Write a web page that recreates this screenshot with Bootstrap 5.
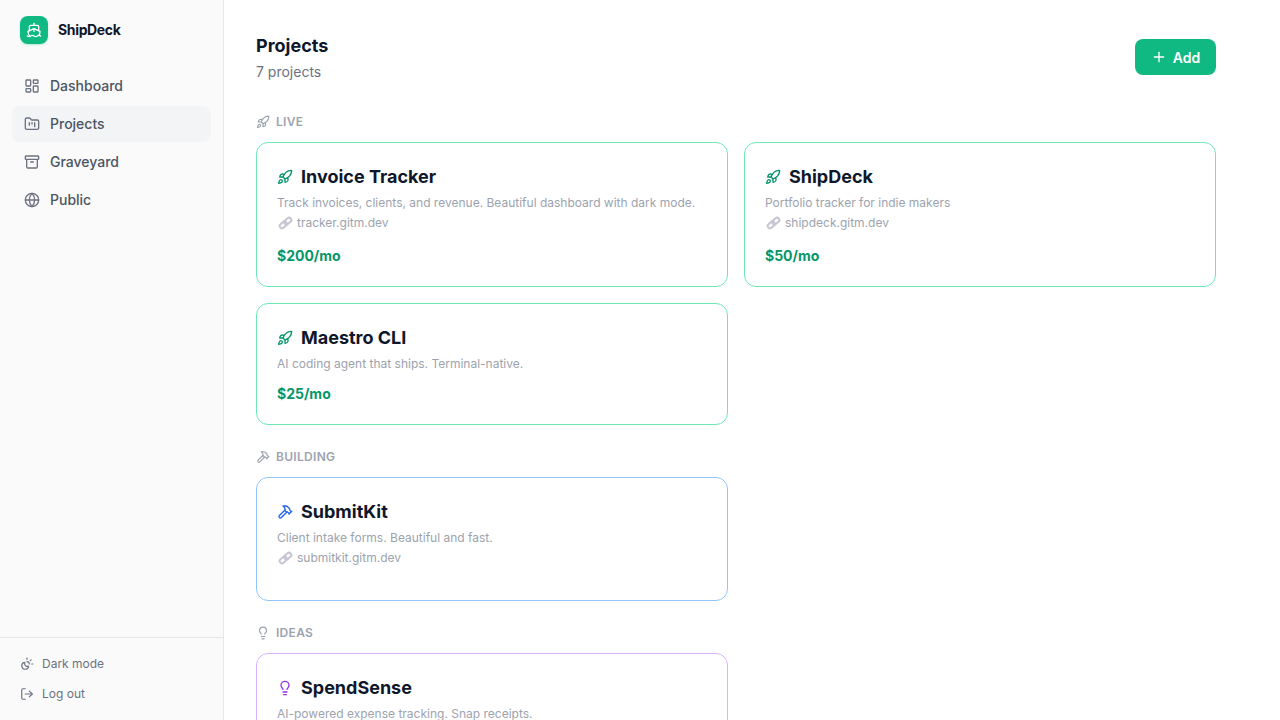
<!DOCTYPE html>
<html lang="en">
<head>
  <meta charset="UTF-8" />
  <meta name="viewport" content="width=device-width, initial-scale=1" />
  <title>Projects | ShipDeck</title>
  <link href="https://cdn.jsdelivr.net/npm/bootstrap@5.3.2/dist/css/bootstrap.min.css" rel="stylesheet" />
  <style>
    html, body { height: 100%; overflow: hidden; }
    body { font-family: Inter, "Liberation Sans", sans-serif; color: #111827; background: #fff; }
    svg.ico { fill: none; stroke: currentColor; stroke-width: 2; stroke-linecap: round; stroke-linejoin: round; flex-shrink: 0; }

    .side { width: 224px; height: 720px; background: #fafafa; border-right: 1px solid #e5e7eb; }
    .brand { padding: 16px 20px 0; height: 68px; gap: 10px; }
    .brand-mark { width: 28px; height: 28px; border-radius: 8px; background: #10b981; color: #fff; box-shadow: 0 1px 2px rgba(16,185,129,.3); }
    .brand-name { height: 28px; font-size: 14px; font-weight: 700; color: #0f172a; letter-spacing: -.35px; }
    .side-nav { padding: 0 12px; gap: 2px; }
    .side-link { height: 36px; padding: 0 12px; gap: 10px; border-radius: 8px; font-size: 14px; line-height: 20px; font-weight: 500; color: #4b5563; text-decoration: none; }
    .side-link svg { color: #6b7280; }
    .side-link.on { background: #f3f4f6; }
    .side-foot { border-top: 1px solid #e5e7eb; padding: 11px 20px 11px; }
    .foot-link { height: 30px; gap: 8px; font-size: 12px; font-weight: 400; color: #6b7280; text-decoration: none; }

    .main-pane { padding: 32px 64px 0 32px; min-width: 0; }
    .page-head { margin-bottom: 32px; }
    .page-title { font-size: 18px; font-weight: 700; line-height: 28px; margin: 0; color: #0f172a; }
    .page-sub { font-size: 14px; line-height: 20px; color: #6b7280; margin: 2px 0 0; }
    .add-btn { width: 81px; height: 36px; background: #10b981; border: 0; border-radius: 8px; color: #fff; font-size: 14px; font-weight: 600; gap: 6px; padding: 0; margin-top: 7px; }
    .add-btn:hover { background: #10b981; color: #fff; }

    .grp-label { font-size: 12px; line-height: 16px; font-weight: 600; letter-spacing: .3px; color: #9ca3af; text-transform: uppercase; gap: 6px; margin-bottom: 12px; height: 16px; }
    .proj-grid { display: grid; grid-template-columns: 472px 472px; gap: 16px; }
    .proj { border: 1px solid; border-radius: 12px; padding: 20px; background: #fff; }
    .proj.live { border-color: #6ee7b7; }
    .proj.build { border-color: #93c5fd; min-height: 124px; }
    .proj.idea { border-color: #d8b4fe; }
    .proj-head { gap: 8px; height: 28px; }
    .proj-name { font-size: 18px; font-weight: 700; line-height: 28px; margin: 0; color: #0f172a; }
    .proj-desc { font-size: 12px; line-height: 16px; color: #9ca3af; margin: 4px 0 0; }
    .proj-url { font-size: 12px; line-height: 16px; color: #9ca3af; gap: 4px; margin-top: 4px; margin-bottom: -1px; }
    .proj-url + .proj-rev { margin-top: 16px; }
    .proj-rev { font-size: 14px; line-height: 20px; font-weight: 700; color: #059669; margin-top: 12px; }
    .ic-live { color: #059669; }
    .ic-build { color: #2563eb; }
    .ic-idea { color: #9333ea; }
    .url-ico { fill: none; stroke: #c8c5d2; stroke-width: 2; flex-shrink: 0; }
    .sec { margin-bottom: 24px; }
  </style>
</head>
<body>
<svg width="0" height="0" class="position-absolute">
  <defs>
    <symbol id="i-rocket" viewBox="0 0 24 24"><path d="M4.5 16.5c-1.5 1.26-2 5-2 5s3.74-.5 5-2c.71-.84.7-2.13-.09-2.91a2.18 2.18 0 0 0-2.91-.09z"/><path d="m12 15-3-3a22 22 0 0 1 2-3.95A12.88 12.88 0 0 1 22 2c0 2.72-.78 7.5-6 11a22.35 22.35 0 0 1-4 2z"/><path d="M9 12H4s.55-3.03 2-4c1.62-1.08 5 0 5 0"/><path d="M12 15v5s3.03-.55 4-2c1.08-1.62 0-5 0-5"/></symbol>
    <symbol id="i-hammer" viewBox="0 0 24 24"><path d="m15 12-8.373 8.373a1 1 0 1 1-3-3L12 9"/><path d="m18 15 4-4"/><path d="m21.5 11.5-1.914-1.914A2 2 0 0 1 19 8.172V7l-2.26-2.26a6 6 0 0 0-4.202-1.756L9 2.96l.92.82A6.18 6.18 0 0 1 12 8.4V10l2 2h1.172a2 2 0 0 1 1.414.586L18.5 14.5"/></symbol>
    <symbol id="i-bulb" viewBox="0 0 24 24"><path d="M15 14c.2-1 .7-1.7 1.5-2.5 1-.9 1.5-2.2 1.5-3.5A6 6 0 0 0 6 8c0 1 .2 2.2 1.5 3.5.7.7 1.3 1.5 1.5 2.5"/><path d="M9 18h6"/><path d="M10 22h4"/></symbol>
    <symbol id="i-chain" viewBox="0 0 16 14"><g transform="rotate(-40 8.5 7)"><rect x="1.6" y="4.7" width="8" height="4.6" rx="2.3"/><rect x="7.4" y="4.7" width="8" height="4.6" rx="2.3"/></g></symbol>
  </defs>
</svg>

<div class="d-flex">
  <aside class="side d-flex flex-column flex-shrink-0">
    <div class="brand d-flex align-items-start">
      <span class="brand-mark d-flex align-items-center justify-content-center">
        <svg class="ico" width="16" height="16" viewBox="0 0 24 24"><path d="M12 10.189V14"/><path d="M12 2v3"/><path d="M19 13V7a2 2 0 0 0-2-2H7a2 2 0 0 0-2 2v6"/><path d="M19.38 20A11.6 11.6 0 0 0 21 14l-8.188-3.639a2 2 0 0 0-1.624 0L3 14a11.6 11.6 0 0 0 2.81 7.76"/><path d="M2 21c.6.5 1.2 1 2.5 1 2.5 0 2.5-2 5-2 1.3 0 1.9.5 2.5 1s1.2 1 2.5 1c2.5 0 2.5-2 5-2 1.3 0 1.9.5 2.5 1"/></svg>
      </span>
      <span class="brand-name lh-1 d-flex align-items-center">ShipDeck</span>
    </div>
    <nav class="side-nav d-flex flex-column flex-grow-1">
      <a class="side-link d-flex align-items-center" href="#">
        <svg class="ico" width="16" height="16" viewBox="0 0 24 24"><rect x="3" y="3" width="7" height="9" rx="1"/><rect x="14" y="3" width="7" height="5" rx="1"/><rect x="14" y="12" width="7" height="9" rx="1"/><rect x="3" y="16" width="7" height="5" rx="1"/></svg>
        Dashboard</a>
      <a class="side-link on d-flex align-items-center" href="#">
        <svg class="ico" width="16" height="16" viewBox="0 0 24 24"><path d="M4 20h16a2 2 0 0 0 2-2V8a2 2 0 0 0-2-2h-7.93a2 2 0 0 1-1.66-.9l-.82-1.2A2 2 0 0 0 7.93 3H4a2 2 0 0 0-2 2v13c0 1.1.9 2 2 2Z"/><path d="M8 10v4"/><path d="M12 10v2"/><path d="M16 10v6"/></svg>
        Projects</a>
      <a class="side-link d-flex align-items-center" href="#">
        <svg class="ico" width="16" height="16" viewBox="0 0 24 24"><rect x="2" y="3" width="20" height="5" rx="1"/><path d="M4 8v11a2 2 0 0 0 2 2h12a2 2 0 0 0 2-2V8"/><path d="M10 12h4"/></svg>
        Graveyard</a>
      <a class="side-link d-flex align-items-center" href="#">
        <svg class="ico" width="16" height="16" viewBox="0 0 24 24"><circle cx="12" cy="12" r="10"/><path d="M12 2a14.5 14.5 0 0 0 0 20 14.5 14.5 0 0 0 0-20"/><path d="M2 12h20"/></svg>
        Public</a>
    </nav>
    <div class="side-foot">
      <a class="foot-link d-flex align-items-center" href="#">
        <svg class="ico" width="14" height="14" viewBox="0 0 24 24"><path d="M12 2v2"/><path d="M14.837 16.385a6 6 0 1 1-7.223-7.222c.624-.147.97.66.715 1.248a4 4 0 0 0 5.26 5.259c.589-.255 1.396.09 1.248.715"/><path d="M16 12a4 4 0 0 0-4-4"/><path d="m19 5-1.256 1.256"/><path d="M20 12h2"/></svg>
        Dark mode</a>
      <a class="foot-link d-flex align-items-center" href="#">
        <svg class="ico" width="14" height="14" viewBox="0 0 24 24"><path d="m16 17 5-5-5-5"/><path d="M21 12H9"/><path d="M9 21H5a2 2 0 0 1-2-2V5a2 2 0 0 1 2-2h4"/></svg>
        Log out</a>
    </div>
  </aside>

  <main class="main-pane flex-grow-1">
    <div class="page-head d-flex justify-content-between align-items-start">
      <div>
        <h1 class="page-title">Projects</h1>
        <p class="page-sub">7 projects</p>
      </div>
      <button class="add-btn btn d-flex align-items-center justify-content-center">
        <svg class="ico" width="16" height="16" viewBox="0 0 24 24"><path d="M5 12h14"/><path d="M12 5v14"/></svg>
        Add
      </button>
    </div>

    <section class="sec">
      <div class="grp-label d-flex align-items-center"><svg class="ico" width="14" height="14"><use href="#i-rocket"/></svg>Live</div>
      <div class="proj-grid">
        <div class="proj live">
          <div class="proj-head d-flex align-items-center"><svg class="ico ic-live" width="16" height="16"><use href="#i-rocket"/></svg><h2 class="proj-name">Invoice Tracker</h2></div>
          <p class="proj-desc">Track invoices, clients, and revenue. Beautiful dashboard with dark mode.</p>
          <div class="proj-url d-flex align-items-center"><svg class="url-ico" width="16" height="14"><use href="#i-chain"/></svg>tracker.gitm.dev</div>
          <div class="proj-rev">$200/mo</div>
        </div>
        <div class="proj live">
          <div class="proj-head d-flex align-items-center"><svg class="ico ic-live" width="16" height="16"><use href="#i-rocket"/></svg><h2 class="proj-name">ShipDeck</h2></div>
          <p class="proj-desc">Portfolio tracker for indie makers</p>
          <div class="proj-url d-flex align-items-center"><svg class="url-ico" width="16" height="14"><use href="#i-chain"/></svg>shipdeck.gitm.dev</div>
          <div class="proj-rev">$50/mo</div>
        </div>
        <div class="proj live">
          <div class="proj-head d-flex align-items-center"><svg class="ico ic-live" width="16" height="16"><use href="#i-rocket"/></svg><h2 class="proj-name">Maestro CLI</h2></div>
          <p class="proj-desc">AI coding agent that ships. Terminal-native.</p>
          <div class="proj-rev">$25/mo</div>
        </div>
      </div>
    </section>

    <section class="sec">
      <div class="grp-label d-flex align-items-center"><svg class="ico" width="14" height="14"><use href="#i-hammer"/></svg>Building</div>
      <div class="proj-grid">
        <div class="proj build">
          <div class="proj-head d-flex align-items-center"><svg class="ico ic-build" width="16" height="16"><use href="#i-hammer"/></svg><h2 class="proj-name">SubmitKit</h2></div>
          <p class="proj-desc">Client intake forms. Beautiful and fast.</p>
          <div class="proj-url d-flex align-items-center"><svg class="url-ico" width="16" height="14"><use href="#i-chain"/></svg>submitkit.gitm.dev</div>
        </div>
      </div>
    </section>

    <section class="sec">
      <div class="grp-label d-flex align-items-center"><svg class="ico" width="14" height="14"><use href="#i-bulb"/></svg>Ideas</div>
      <div class="proj-grid">
        <div class="proj idea">
          <div class="proj-head d-flex align-items-center"><svg class="ico ic-idea" width="16" height="16"><use href="#i-bulb"/></svg><h2 class="proj-name">SpendSense</h2></div>
          <p class="proj-desc">AI-powered expense tracking. Snap receipts.</p>
        </div>
      </div>
    </section>
  </main>
</div>

<script src="https://cdn.jsdelivr.net/npm/bootstrap@5.3.2/dist/js/bootstrap.bundle.min.js"></script>
</body>
</html>
